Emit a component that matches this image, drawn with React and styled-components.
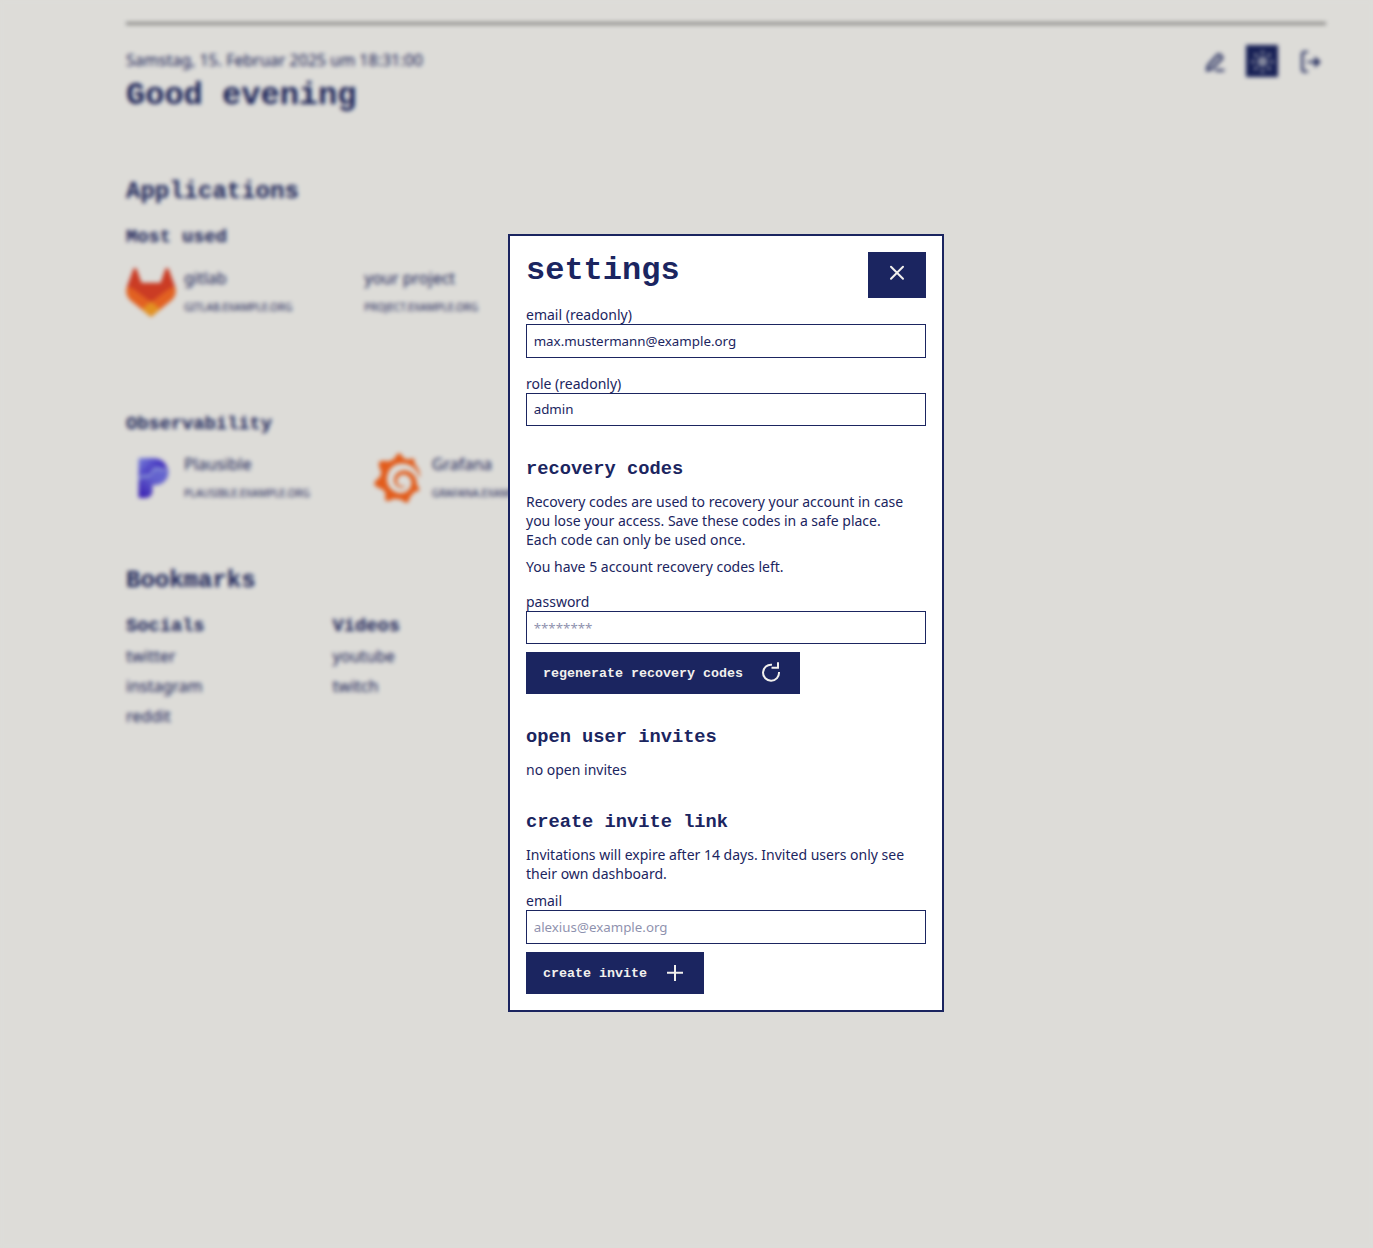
import React from "react";
import styled, { createGlobalStyle } from "styled-components";
import { SiGrafana } from "react-icons/si";

const navy = "#1b2560";
const cream = "#f6f5f1";
const buttonText = "#f1f0ed";
const mono = `"Liberation Mono", "Courier New", monospace`;
const sans = `"Noto Sans", sans-serif`;

const GlobalStyle = createGlobalStyle`
  *, *::before, *::after { box-sizing: border-box; }
  html, body { margin: 0; height: 100%; overflow: hidden; }
  body { background: ${cream}; color: ${navy}; font-family: ${sans}; font-size: 16px; }
  h1, h2, h3, p, ul { margin: 0; padding: 0; }
  h1, h2, h3 { font-family: ${mono}; font-weight: 700; }
`;

const Page = styled.main`
  width: 1326px;
  height: 1248px;
  padding: 22px 0 0 126px;
`;

const Rule = styled.hr`
  height: 3px;
  margin: 0;
  border: 0;
  background: #989795;
`;

const Header = styled.header`
  display: flex;
  justify-content: space-between;
  align-items: flex-start;
  padding-top: 20px;
  height: 153px;
`;

const Greeting = styled.div`
  display: flex;
  flex-direction: column;
  gap: 7px;
  padding-top: 4px;
  line-height: 22px;
  h1 { font-size: 32px; line-height: 36px; }
`;

const Actions = styled.nav`
  display: flex;
  gap: 16px;
`;

const IconButton = styled.button`
  display: flex;
  width: 32px;
  height: 32px;
  padding: 4px;
  border: 0;
  color: ${(p) => (p.$active ? cream : navy)};
  background: ${(p) => (p.$active ? navy : "transparent")};
`;

const SectionTitle = styled.h2`
  font-size: 24px;
  line-height: 27px;
`;

const GroupTitle = styled.h3`
  font-size: 18.72px;
  line-height: 21px;
`;

const AppGroup = styled.section`
  height: ${(p) => p.$height}px;
  padding-top: ${(p) => p.$top}px;
`;

const AppList = styled.div`
  display: flex;
  gap: 64px;
  margin-top: ${(p) => p.$top}px;
`;

const AppCard = styled.a`
  display: flex;
  gap: 8px;
  white-space: nowrap;
  color: inherit;
`;

const AppIcon = styled.span`
  display: flex;
  justify-content: center;
  width: 50px;
  height: 50px;
`;

const AppText = styled.span`
  display: flex;
  flex-direction: column;
  gap: 11px;
  line-height: 22px;
`;

const AppHost = styled.small`
  font-size: 10.4px;
  line-height: 15px;
  text-transform: uppercase;
`;

const BookmarkColumns = styled.div`
  display: flex;
  gap: 128px;
  margin-top: 22px;
`;

const BookmarkList = styled.ul`
  display: flex;
  flex-direction: column;
  gap: 8px;
  margin-top: 8px;
  list-style: none;
  line-height: 22px;
`;

const Backdrop = styled.div`
  position: fixed;
  inset: 0;
  display: flex;
  align-items: flex-start;
  padding: 234.33px 0 0 508px;
  background: rgba(0, 0, 0, 0.1);
  backdrop-filter: blur(2px);
`;

const Dialog = styled.div`
  width: 436px;
  padding: 16px;
  border: 2px solid ${navy};
  background: #fff;
  font-size: 14px;
  line-height: 19px;
`;

const DialogHeader = styled.div`
  display: flex;
  justify-content: space-between;
  align-items: flex-start;
  height: 46px;
  margin-bottom: 7px;
  h1 { font-size: 32px; line-height: 38px; }
`;

const Button = styled.button`
  display: flex;
  align-items: flex-start;
  gap: 16px;
  height: ${(p) => (p.$close ? 46 : 42)}px;
  padding: 8px 16px;
  border: 1px solid ${navy};
  background: ${navy};
  color: ${buttonText};
  font: 700 13.333px/25px ${mono};
`;

const Block = styled.section`
  margin-top: 32px;
  h3 { height: 34px; font-size: 18.72px; line-height: 23px; }
`;

const Field = styled.label`
  display: block;
  margin-top: ${(p) => p.$top || 0}px;
  margin-bottom: ${(p) => p.$bottom || 0}px;
`;

const Input = styled.input`
  display: block;
  width: 100%;
  height: 33.33px;
  padding: 6.67px;
  border: 1px solid ${navy};
  border-radius: 0;
  outline: 0;
  background: #fff;
  color: ${navy};
  font: 13.333px ${sans};
  &::placeholder { color: ${navy}; opacity: 0.5; }
`;

const Note = styled.p`
  margin-top: ${(p) => p.$top || 0}px;
`;

const Icon = ({ children, ...rest }) => (
  <svg width="24" height="24" viewBox="0 0 24 24" fill="none" stroke="currentColor" strokeWidth="2" {...rest}>
    {children}
  </svg>
);

const EditIcon = () => (
  <Icon strokeLinecap="round" strokeLinejoin="round" strokeWidth="2.200">
    <path d="M5 21.500l1-5L15.500 6a2 2 0 0 1 2.900 0l1.200 1.200a2 2 0 0 1 0 2.900L9.800 20zM14 21.300h7.500" fill="currentColor" fillOpacity="0.15" />
  </Icon>
);

const SunIcon = () => (
  <Icon strokeLinecap="round">
    <circle cx="12.500" cy="12.700" r="3.600" fill="currentColor" fillOpacity="0.4" strokeWidth="1.500" />
    <path d="M12.500 2.700v1.500M12.500 21.200v1.500M2.500 12.700h1.500M21 12.700h1.500M5.500 5.700l1 1M18.500 18.700l1 1M5.500 19.700l1-1M18.500 6.700l1-1" />
  </Icon>
);

const LogoutIcon = () => (
  <Icon strokeWidth="2.200">
    <path d="M10 3H6.300a2 2 0 0 0-2 2v15.500a2 2 0 0 0 2 2H10M9.500 13h9" />
    <path d="M17.500 9.300l4 3.700-4 3.700z" fill="currentColor" fillOpacity="0.6" strokeWidth="1.800" />
  </Icon>
);

const CloseIcon = () => (
  <Icon strokeLinecap="round">
    <path d="M6 5.700l12 12M18 5.700l-12 12" />
  </Icon>
);

const ReloadIcon = () => (
  <Icon>
    <path d="M13 3.750A8 8 0 1 0 20 11M19 1.200V6.700h-6.500" />
  </Icon>
);

const PlusIcon = () => (
  <Icon>
    <path d="M12 4v16M4 11.700h16" />
  </Icon>
);

const GitlabLogo = () => (
  <svg width="50" height="50" viewBox="0 0 50 50">
    <path fill="#e24329" d="M49 19.500L42.500 1.800Q41 0 39.500 1.800L34.500 15.800H15.500L10.500 1.800Q9 0 7.500 1.800L1 19.500 25 36 49 19.500Z" />
    <path fill="#fc6d26" d="M49 19.500Q52 29 43.500 35L25 50 6.500 35Q-2 29 1 19.500 6 20.500 9.500 23.500L25 35 40.500 23.500Q44 20.500 49 19.500Z" />
    <path fill="#fca326" d="M25 34.500L34 42 27 48.500Q25 50 23 48.500L16 42Z" />
  </svg>
);

const PlausibleLogo = () => (
  <svg width="42" height="42" viewBox="0 0 42 42">
    <defs>
      <linearGradient id="plausibleTop" x1="0" y1="0" x2="1" y2="0.7">
        <stop offset="0" stopColor="#8a93f3" />
        <stop offset="0.6" stopColor="#5141d8" />
        <stop offset="1" stopColor="#4b38d3" />
      </linearGradient>
      <linearGradient id="plausibleBottom" x1="1" y1="0" x2="0.2" y2="1">
        <stop offset="0" stopColor="#7476e8" />
        <stop offset="0.45" stopColor="#6f6de5" />
        <stop offset="1" stopColor="#4429c9" />
      </linearGradient>
    </defs>
    <path fill="url(#plausibleTop)" d="M7.500 2.500Q7.500 1 9 1H22C30 1 35 5 36.500 12L30 11.500C23 9 21 13 19.500 16.500C17.500 20 13 16.500 7.500 21Z" />
    <path fill="#8f97ec" d="M7.500 20C13 15.500 17.500 19 19.500 15.500C21 12 23 8 30 10.500L33 14 22 22 7.500 25Z" />
    <path fill="url(#plausibleBottom)" d="M7.500 24C11 18.500 17 23 20 18.500C22 15 24 11.500 30 14L37 11.500C39 21 33 28 24 28H21.500V34C21.500 38.500 18 41 14 41H9Q7.500 41 7.500 39.500Z" />
  </svg>
);

const LogoOffset = styled.span`
  display: flex;
  padding: ${(p) => p.$pad};
  margin: ${(p) => p.$shift || 0};
`;

const apps = [
  { name: "gitlab", host: "gitlab.example.org", icon: <GitlabLogo /> },
  { name: "your project", host: "project.example.org" },
];

const observability = [
  {
    name: "Plausible",
    host: "plausible.example.org",
    icon: <LogoOffset $pad="4px 0 0 2px"><PlausibleLogo /></LogoOffset>,
  },
  {
    name: "Grafana",
    host: "grafana.example.org",
    icon: <LogoOffset $shift="0 2px 0 -2px"><SiGrafana size={50} color="#fc671f" /></LogoOffset>,
  },
];

const bookmarks = [
  { title: "Socials", links: ["twitter", "instagram", "reddit"] },
  { title: "Videos", links: ["youtube", "twitch"] },
];

const Apps = ({ items, top }) => (
  <AppList $top={top}>
    {items.map((item) => (
      <AppCard key={item.name}>
        {item.icon ? <AppIcon>{item.icon}</AppIcon> : <span />}
        <AppText>
          {item.name}
          <AppHost>{item.host}</AppHost>
        </AppText>
      </AppCard>
    ))}
  </AppList>
);

export default function App() {
  return (
    <>
      <GlobalStyle />
      <Page>
        <Rule />
        <Header>
          <Greeting>
            <span>Samstag, 15. Februar 2025 um 18:31:00</span>
            <h1>Good evening</h1>
          </Greeting>
          <Actions>
            <IconButton aria-label="Edit"><EditIcon /></IconButton>
            <IconButton aria-label="Settings" $active><SunIcon /></IconButton>
            <IconButton aria-label="Log out"><LogoutIcon /></IconButton>
          </Actions>
        </Header>

        <SectionTitle>Applications</SectionTitle>
        <AppGroup $top={22} $height={208}>
          <GroupTitle>Most used</GroupTitle>
          <Apps items={apps} top={19} />
        </AppGroup>
        <AppGroup $top={1} $height={154}>
          <GroupTitle>Observability</GroupTitle>
          <Apps items={observability} top={18} />
        </AppGroup>

        <SectionTitle>Bookmarks</SectionTitle>
        <BookmarkColumns>
          {bookmarks.map((group) => (
            <div key={group.title}>
              <GroupTitle>{group.title}</GroupTitle>
              <BookmarkList>
                {group.links.map((link) => <li key={link}>{link}</li>)}
              </BookmarkList>
            </div>
          ))}
        </BookmarkColumns>
      </Page>

      <Backdrop>
        <Dialog role="dialog" aria-label="settings">
          <DialogHeader>
            <h1>settings</h1>
            <Button $close aria-label="Close"><CloseIcon /></Button>
          </DialogHeader>
          <Field>email (readonly)<Input readOnly value="max.mustermann@example.org" /></Field>
          <Field $top={16}>role (readonly)<Input readOnly value="admin" /></Field>

          <Block>
            <h3>recovery codes</h3>
            <Note>
              Recovery codes are used to recovery your account in case you lose your access. Save these codes in a safe place.
              <br />
              Each code can only be used once.
            </Note>
            <Note $top={8}>You have 5 account recovery codes left.</Note>
            <Field $top={16} $bottom={8}>password<Input type="text" placeholder="********" /></Field>
            <Button>regenerate recovery codes<ReloadIcon /></Button>
          </Block>

          <Block>
            <h3>open user invites</h3>
            <Note>no open invites</Note>
          </Block>

          <Block>
            <h3>create invite link</h3>
            <Note>Invitations will expire after 14 days. Invited users only see their own dashboard.</Note>
            <Field $top={8} $bottom={8}>email<Input placeholder="alexius@example.org" /></Field>
            <Button>create invite<PlusIcon /></Button>
          </Block>
        </Dialog>
      </Backdrop>
    </>
  );
}
